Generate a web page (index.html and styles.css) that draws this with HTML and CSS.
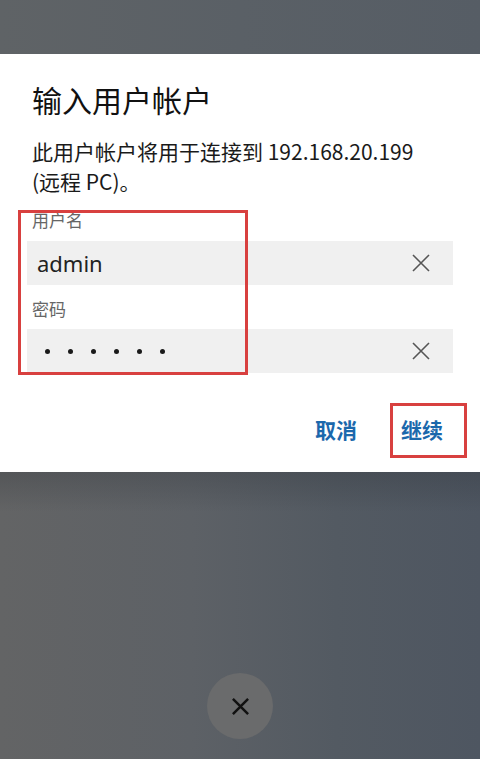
FILE: index.html
```html
<!DOCTYPE html>
<html lang="zh-CN">
<head>
  <meta charset="UTF-8">
  <meta name="viewport" content="width=device-width, initial-scale=1.0">
  <title>输入用户帐户</title>
  <link rel="stylesheet" href="styles.css">
</head>
<body>
  <div class="screen">
    <div class="top-bar"></div>

    <div class="dialog">
      <h2 class="dialog-title">输入用户帐户</h2>
      <p class="dialog-text">此用户帐户将用于连接到 192.168.20.199 (远程 PC)。</p>

      <div class="form-group">
        <label class="field-label">用户名</label>
        <div class="field">
          <span class="field-value">admin</span>
          <svg class="clear-icon" viewBox="0 0 20 20" width="20" height="20">
            <path d="M2 2 L18 18 M18 2 L2 18" stroke="#555" stroke-width="1.6" fill="none"/>
          </svg>
        </div>
      </div>

      <div class="form-group">
        <label class="field-label">密码</label>
        <div class="field">
          <span class="dots">
            <i></i><i></i><i></i><i></i><i></i><i></i>
          </span>
          <svg class="clear-icon" viewBox="0 0 20 20" width="20" height="20">
            <path d="M2 2 L18 18 M18 2 L2 18" stroke="#555" stroke-width="1.6" fill="none"/>
          </svg>
        </div>
      </div>

      <div class="actions">
        <button type="button" class="text-btn">取消</button>
        <button type="button" class="text-btn">继续</button>
      </div>

      <!-- annotation boxes -->
      <div class="mark mark-fields"></div>
      <div class="mark mark-continue"></div>
    </div>

    <div class="backdrop">
      <button type="button" class="close-btn">
        <svg viewBox="0 0 20 20" width="19" height="19">
          <path d="M2 2 L18 18 M18 2 L2 18" stroke="#111" stroke-width="2.6" fill="none"/>
        </svg>
      </button>
    </div>
  </div>
</body>
</html>
```

FILE: styles.css
```css
* {
  box-sizing: border-box;
  margin: 0;
  padding: 0;
}

body {
  font-family: "Noto Sans CJK SC", "Noto Sans", sans-serif;
  background: #5b6066;
}

.screen {
  width: 480px;
  height: 759px;
  display: flex;
  flex-direction: column;
  background: linear-gradient(90deg, #636465 0%, #5d6166 40%, #535a62 70%, #4e5661 100%);
}

.top-bar {
  height: 54px;
  background: linear-gradient(90deg, #5f6366, #5a6066 50%, #565d65);
}

.dialog {
  position: relative;
  background: #fff;
  padding: 27px 32px 28px;
}

.dialog-title {
  font-size: 30px;
  font-weight: 400;
  line-height: 36px;
  color: #111;
}

.dialog-text {
  margin-top: 19px;
  font-size: 21px;
  line-height: 30px;
  color: #1a1a1a;
  padding-right: 20px;
}

.form-group {
  margin-top: 12px;
}

.field-label {
  display: block;
  font-size: 17px;
  line-height: 24px;
  color: #666;
}

.field {
  margin: 9px -5px 0;
  height: 44px;
  background: #f0f0f0;
  display: flex;
  align-items: center;
  justify-content: space-between;
  padding: 0 22px 0 10px;
}

.form-group + .form-group .field {
  margin-top: 8px;
}

.field-value {
  font-size: 22px;
  color: #222;
  font-family: "Noto Sans", sans-serif;
}

.dots {
  display: flex;
  gap: 18px;
  padding-left: 8px;
}

.dots i {
  display: block;
  width: 5px;
  height: 5px;
  border-radius: 50%;
  background: #1a1a1a;
}

.actions {
  margin-top: 41px;
  display: flex;
  justify-content: flex-end;
  gap: 44px;
  padding-right: 5px;
}

.text-btn {
  border: none;
  background: none;
  font-family: inherit;
  font-size: 21px;
  line-height: 30px;
  font-weight: 700;
  color: #1b68ac;
  cursor: pointer;
}

.mark {
  position: absolute;
  border: 3px solid #d8403f;
}

.mark-fields {
  left: 18px;
  top: 156px;
  width: 230px;
  height: 165px;
}

.mark-continue {
  left: 390px;
  top: 349px;
  width: 77px;
  height: 55px;
}

.backdrop {
  flex: 1;
  display: flex;
  justify-content: center;
  align-items: flex-end;
  padding-bottom: 20px;
  background: linear-gradient(180deg, rgba(40, 44, 50, 0.25), rgba(40, 44, 50, 0) 40px);
}

.close-btn {
  width: 66px;
  height: 66px;
  border-radius: 50%;
  border: none;
  background: #6a6b6c;
  display: flex;
  align-items: center;
  justify-content: center;
}
```
